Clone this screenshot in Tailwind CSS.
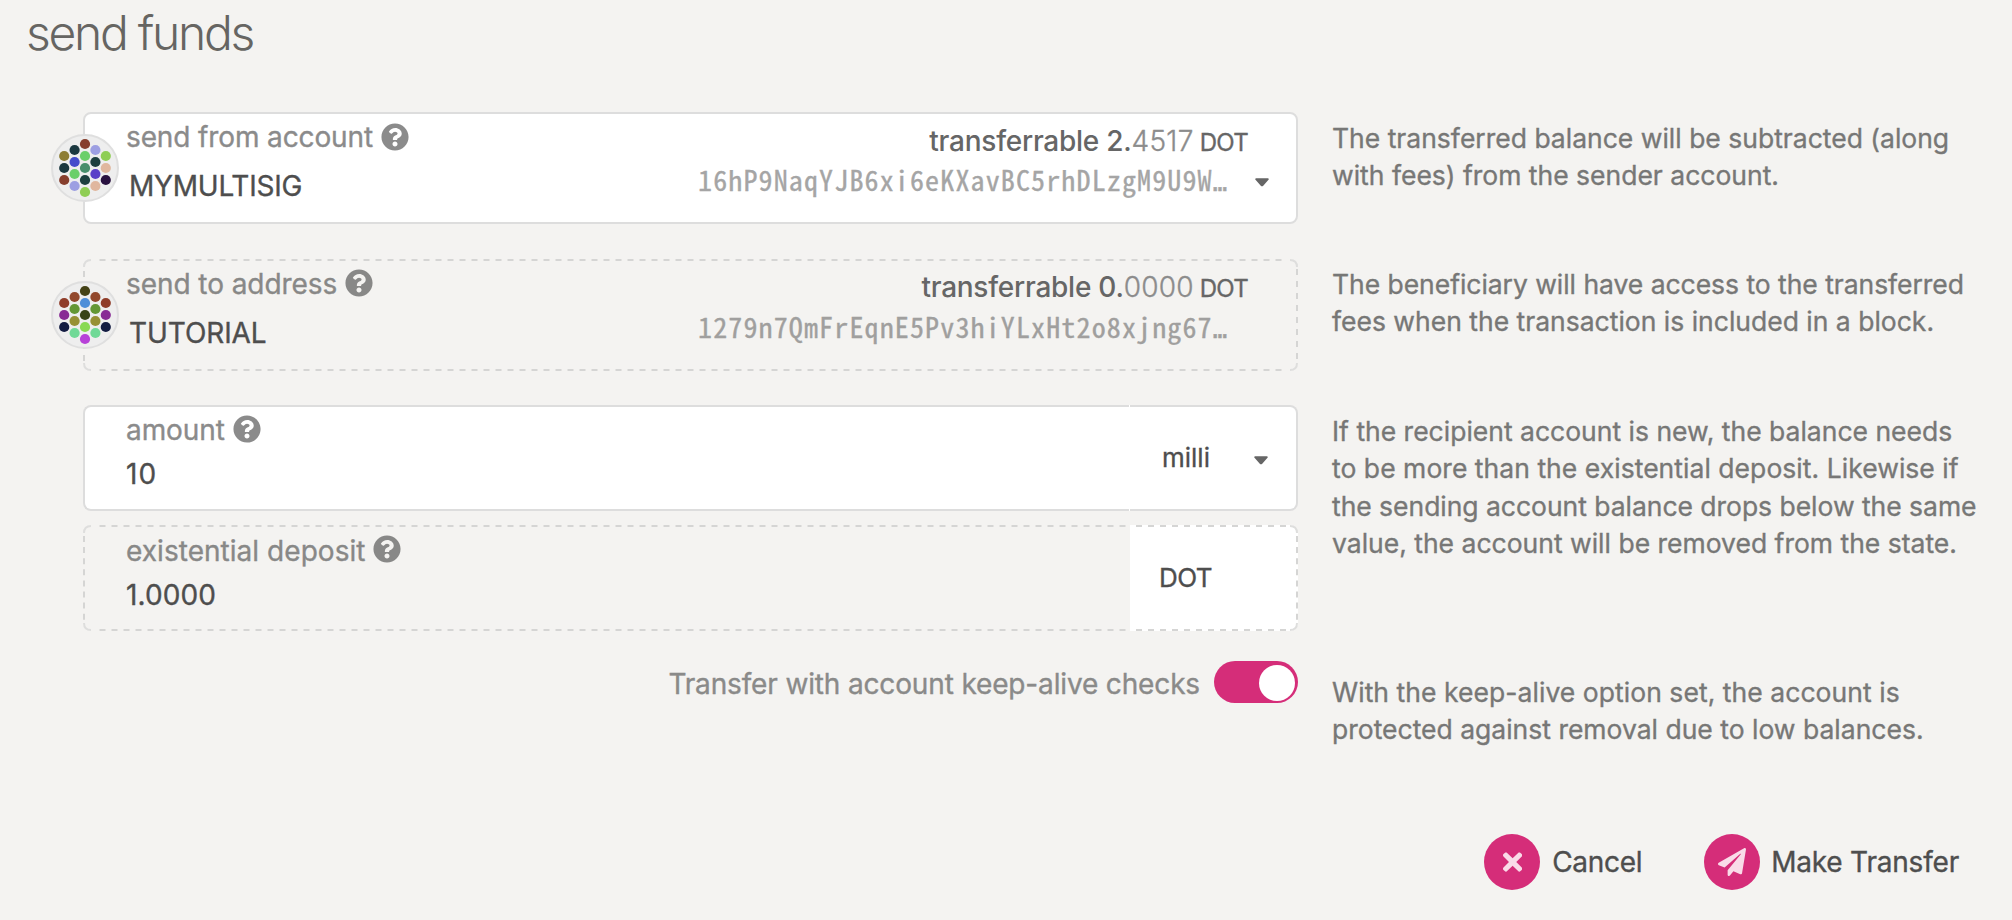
<!DOCTYPE html>
<html lang="en">
<head>
<meta charset="utf-8">
<title>send funds</title>
<script src="https://cdn.jsdelivr.net/npm/@tailwindcss/browser@4"></script>
</head>
<body class="h-[920px] overflow-hidden bg-[#f4f3f1] font-['Inter','Liberation_Sans',sans-serif] text-[28px] leading-8 text-[#4e4e4e]">
<svg class="hidden">
  <symbol id="help" viewBox="0 0 512 512"><path d="M504 256c0 136.997-111.043 248-248 248S8 392.997 8 256C8 119.083 119.043 8 256 8s248 111.083 248 248zM262.655 90c-54.497 0-89.255 22.957-116.549 63.758-3.536 5.286-2.353 12.415 2.715 16.258l34.699 26.31c5.205 3.947 12.621 3.008 16.665-2.122 17.864-22.658 30.113-35.797 57.303-35.797 20.429 0 45.698 13.148 45.698 32.958 0 14.976-12.363 22.667-32.534 33.976C247.128 238.528 216 254.941 216 296v4c0 6.627 5.373 12 12 12h56c6.627 0 12-5.373 12-12v-1.333c0-28.462 83.186-29.647 83.186-106.667 0-58.002-60.165-102-116.531-102zM256 338c-25.365 0-46 20.635-46 46 0 25.364 20.635 46 46 46s46-20.636 46-46c0-25.364-20.635-46-46-46z"/></symbol>
  <symbol id="caret" viewBox="0 0 14 9"><path d="M1.2 0.3h11.6c.9 0 1.3.9.7 1.5L8 7.9c-.6.6-1.4.6-2 0L.5 1.8C-.1 1.200.3.3 1.2.3z"/></symbol>
</svg>

<h1 class="pt-[9px] pl-[26px] text-5xl leading-[48px] font-light tracking-[-2.3px] text-[#666562]">send funds</h1>

<main class="pt-[55px] pl-[83px] [-webkit-text-stroke-width:0.35px]">
  <!-- send from -->
  <section class="flex h-[147px] items-start gap-[34px]">
    <div class="relative flex h-[112px] w-[1215px] rounded-lg border-2 border-[#dddddd] bg-white">
      <svg class="absolute top-[20px] -left-[34px] size-[68px]" viewBox="-34 -34 68 68">
        <circle r="33" fill="#eeeeee" stroke="#dfdfdf" stroke-width="2"/>
        <g>
          <circle cx="0" cy="-24" r="5.1" fill="#863e2d"/><circle cx="0" cy="-12" r="5.1" fill="#6bcf69"/><circle cx="0" cy="0" r="5.1" fill="#488e6c"/><circle cx="0" cy="12" r="5.1" fill="#1d3f3f"/><circle cx="0" cy="24" r="5.1" fill="#8fce55"/>
          <circle cx="-10.4" cy="-18" r="5.1" fill="#1b3840"/><circle cx="-10.4" cy="-6" r="5.1" fill="#444ccb"/><circle cx="-10.4" cy="6" r="5.1" fill="#6bcf69"/><circle cx="-10.4" cy="18" r="5.1" fill="#9d9fe2"/>
          <circle cx="10.4" cy="-18" r="5.1" fill="#9d9fe2"/><circle cx="10.4" cy="-6" r="5.1" fill="#1d3f3f"/><circle cx="10.4" cy="6" r="5.1" fill="#5940c8"/><circle cx="10.4" cy="18" r="5.1" fill="#e0b79e"/>
          <circle cx="-20.8" cy="-12" r="5.1" fill="#8d7d35"/><circle cx="-20.8" cy="0" r="5.1" fill="#1b3840"/><circle cx="-20.8" cy="12" r="5.1" fill="#863e2d"/>
          <circle cx="20.8" cy="-12" r="5.1" fill="#8fce55"/><circle cx="20.8" cy="0" r="5.1" fill="#e0b79e"/><circle cx="20.8" cy="12" r="5.1" fill="#29113f"/>
        </g>
      </svg>
      <div class="flex-1 pt-[7px] pl-[41px]">
        <div class="flex h-8 gap-[8px] tracking-[-0.12px] text-[#8b8b8b]">send from account <svg class="mt-[2px] size-7 fill-current"><use href="#help"/></svg></div>
        <div class="mt-[17px] ml-[3px] tracking-[-0.24px]">MYMULTISIG</div>
      </div>
      <div class="w-[550px] pt-[11px]">
        <div class="flex h-8 justify-end text-[#666666]"><span class="font-medium tracking-[-0.25px] [-webkit-text-stroke-width:0px]">transferrable 2.</span><span class="font-light tracking-[0.3px] text-[#8c8c8c]">4517</span><span class="ml-1.5 text-[24px] tracking-[-0.7px] leading-[35px]">DOT</span></div>
        <div class="mt-[6px] h-8 text-[#a5a5a5] font-['Noto_Sans_Mono_CJK_SC',monospace] tracking-[1.14px] whitespace-nowrap">16hP9NaqYJB6xi6eKXavBC5rhDLzgM9U9W<span class="font-['DejaVu_Sans_Mono',monospace] text-[24px] leading-none">…</span></div>
      </div>
      <div class="w-[48px] pt-[64px] pl-[7px]"><svg class="h-[9px] w-[14px] fill-[#666]"><use href="#caret"/></svg></div>
    </div>
    <p class="pt-[8px] text-[26.5px] leading-[37.33px] text-[#777776]">The transferred balance will be subtracted (along<br>with fees) from the sender account.</p>
  </section>

  <!-- send to -->
  <section class="flex h-[146px] items-start gap-[34px]">
    <div class="relative flex h-[112px] w-[1215px] p-0.5">
      <svg class="absolute inset-0" width="1215" height="112" fill="none" stroke="#d5d5d4" stroke-width="2">
        <path d="M16.500 1H1202M16.500 111H1202" stroke-dasharray="6 6"/><path d="M1 12V102M1214 10V102" stroke-dasharray="6 6"/>
        <path d="M1 8Q1 1 8 1M1207 1Q1214 1 1214 8M1 104Q1 111 8 111M1207 111Q1214 111 1214 104" stroke="#dededd"/>
      </svg>
      <svg class="absolute top-[22px] -left-[32px] size-[68px]" viewBox="-34 -34 68 68">
        <circle r="33" fill="#eeeeee" stroke="#dfdfdf" stroke-width="2"/>
        <g>
          <circle cx="0" cy="-24" r="5.1" fill="#444216"/><circle cx="0" cy="-12" r="5.1" fill="#4e8ed8"/><circle cx="0" cy="0" r="5.1" fill="#374216"/><circle cx="0" cy="12" r="5.1" fill="#88d953"/><circle cx="0" cy="24" r="5.1" fill="#b741d8"/>
          <circle cx="-10.4" cy="-18" r="5.1" fill="#92482c"/><circle cx="-10.4" cy="-6" r="5.1" fill="#649735"/><circle cx="-10.4" cy="6" r="5.1" fill="#979035"/><circle cx="-10.4" cy="18" r="5.1" fill="#70d997"/>
          <circle cx="10.4" cy="-18" r="5.1" fill="#92482c"/><circle cx="10.4" cy="-6" r="5.1" fill="#649735"/><circle cx="10.4" cy="6" r="5.1" fill="#979035"/><circle cx="10.4" cy="18" r="5.1" fill="#70d997"/>
          <circle cx="-20.8" cy="-12" r="5.1" fill="#8f3d29"/><circle cx="-20.8" cy="0" r="5.1" fill="#882b94"/><circle cx="-20.8" cy="12" r="5.1" fill="#131c42"/>
          <circle cx="20.8" cy="-12" r="5.1" fill="#8f3d29"/><circle cx="20.8" cy="0" r="5.1" fill="#882b94"/><circle cx="20.8" cy="12" r="5.1" fill="#131c42"/>
        </g>
      </svg>
      <div class="flex-1 pt-[7px] pl-[41px]">
        <div class="flex h-8 gap-[8px] tracking-[-0.07px] text-[#888887]">send to address <svg class="mt-px size-7 fill-current"><use href="#help"/></svg></div>
        <div class="mt-[17px] ml-[3px] tracking-[-0.08px]">TUTORIAL</div>
      </div>
      <div class="w-[550px] pt-[10px]">
        <div class="flex h-8 justify-end text-[#666666]"><span class="font-medium tracking-[-0.25px] [-webkit-text-stroke-width:0px]">transferrable 0.</span><span class="font-light tracking-[0.2px] text-[#8c8c8c]">0000</span><span class="ml-1.5 text-[24px] tracking-[-0.7px] leading-[35px]">DOT</span></div>
        <div class="mt-[7px] h-8 text-[#a09f9e] font-['Noto_Sans_Mono_CJK_SC',monospace] tracking-[1.14px] whitespace-nowrap">1279n7QmFrEqnE5Pv3hiYLxHt2o8xjng67<span class="font-['DejaVu_Sans_Mono',monospace] text-[24px] leading-none">…</span></div>
      </div>
      <div class="w-[48px]"></div>
    </div>
    <p class="pt-[7px] text-[26.5px] leading-[37.33px] text-[#777776]"><span class="tracking-[-0.04px]">The beneficiary will have access to the transferred</span><br>fees when the transaction is included in a block.</p>
  </section>

  <!-- amount -->
  <section class="flex h-[256px] items-start gap-[34px]">
    <div class="flex w-[1215px] flex-col gap-[14px]">
      <div class="flex h-[106px]">
        <div class="w-[1046px] rounded-l-lg border-2 border-r-0 border-[#dddddd] bg-white pt-[7px] pl-[41px]">
          <div class="flex h-8 gap-[8px] tracking-[-0.09px] text-[#8b8b8b]">amount <svg class="mt-px size-7 fill-current"><use href="#help"/></svg></div>
          <div class="mt-3 tracking-[1.2px]">10</div>
        </div>
        <div class="w-px bg-white"></div>
        <div class="flex w-[168px] items-start rounded-r-lg border-2 border-l-0 border-[#dddddd] bg-white pt-[35px] pl-[32px] text-[26px]">
          <span class="w-[92px]">milli</span><svg class="mt-[14px] h-[9px] w-[14px] fill-[#666]"><use href="#caret"/></svg>
        </div>
      </div>
      <div class="relative flex h-[106px] p-0.5">
        <div class="flex-1 pt-[8px] pl-[41px]">
          <div class="flex h-8 gap-[7px] tracking-[0.04px] text-[#888887]">existential deposit <svg class="size-7 fill-current"><use href="#help"/></svg></div>
          <div class="mt-3 tracking-[0.1px]">1.0000</div>
        </div>
        <div class="-m-0.5 w-[168px] rounded-r-lg bg-white pt-[37px] pl-[29px] text-[26px] tracking-[-0.5px]">DOT</div>
        <svg class="absolute inset-0" width="1215" height="106" fill="none" stroke="#d5d5d4" stroke-width="2">
          <path d="M16.500 1H1047M16.500 105H1047M1053 1H1204M1053 105H1204" stroke-dasharray="6 6"/><path d="M1 11V96M1214 11V96" stroke-dasharray="6 5.1"/>
          <path d="M1 8Q1 1 8 1M1207 1Q1214 1 1214 8M1 98Q1 105 8 105M1207 105Q1214 105 1214 98" stroke="#dededd"/>
        </svg>
      </div>
    </div>
    <p class="pt-[8px] text-[26.5px] leading-[37.33px] text-[#777776]">If the recipient account is new, the balance needs<br><span class="tracking-[0.04px]">to be more than the existential deposit. Likewise if</span><br><span class="tracking-[-0.03px]">the sending account balance drops below the same</span><br>value, the account will be removed from the state.</p>
  </section>

  <!-- keep-alive -->
  <section class="flex h-[173px] items-start gap-[34px]">
    <div class="flex w-[1215px] justify-end gap-[14px]">
      <span class="pt-[7px] tracking-[-0.148px] text-[#8a8a89]">Transfer with account keep-alive checks</span>
      <div class="flex h-[42px] w-[84px] items-center justify-end rounded-full bg-[#d52d79] pr-[3px]"><span class="mt-px size-9 rounded-full bg-white"></span></div>
    </div>
    <p class="pt-[13px] text-[26.5px] leading-[37.33px] text-[#777776]"><span class="tracking-[0.05px]">With the keep-alive option set, the account is</span><br>protected against removal due to low balances.</p>
  </section>

  <footer class="flex items-center justify-end gap-[62px] pr-[53px]">
    <div class="flex items-center gap-3">
      <span class="flex size-14 items-center justify-center rounded-full bg-[#d52d79]"><svg class="h-7 w-[19.25px] fill-[#f9dbe8]" viewBox="0 0 352 512"><path d="M242.72 256l100.07-100.07c12.28-12.28 12.28-32.19 0-44.48l-22.24-22.24c-12.28-12.28-32.19-12.28-44.48 0L176 189.28 75.93 89.21c-12.28-12.28-32.19-12.28-44.48 0L9.21 111.45c-12.28 12.28-12.28 32.19 0 44.48L109.28 256 9.21 356.07c-12.28 12.28-12.28 32.19 0 44.48l22.24 22.24c12.28 12.28 32.2 12.28 44.48 0L176 322.72l100.07 100.07c12.28 12.28 32.2 12.28 44.48 0l22.24-22.24c12.28-12.28 12.28-32.19 0-44.48L242.72 256z"/></svg></span>
      <span class="tracking-[-0.3px]">Cancel</span>
    </div>
    <div class="flex items-center gap-[11px]">
      <span class="flex size-14 items-center justify-center rounded-full bg-[#d52d79]"><svg class="size-7 fill-[#f9dbe8]" viewBox="0 0 512 512"><path d="M476 3.2L12.5 270.6c-18.1 10.4-15.8 35.6 2.2 43.2L121 358.4l287.3-253.2c5.5-4.9 13.3 2.6 8.6 8.3L176 407v80.5c0 23.6 28.5 32.9 42.5 15.8L282 426l124.6 52.2c14.2 6 30.4-2.9 33-18.2l72-432C515 7.8 493.3-6.8 476 3.2z"/></svg></span>
      <span class="tracking-[-0.2px]">Make Transfer</span>
    </div>
  </footer>
</main>
</body>
</html>
